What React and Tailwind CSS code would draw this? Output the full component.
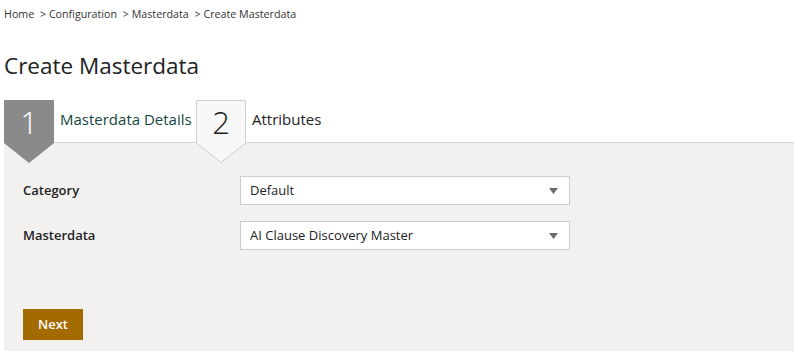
import React from 'react';

const font = { fontFamily: '"Open Sans", "Noto Sans", sans-serif' };

const StepBadge = ({ num, active }) => (
  <div className="relative z-10 w-[50px] h-[42px] shrink-0">
    <svg className="absolute left-0 top-0 overflow-visible" width="50" height="63" viewBox="0 0 50 63">
      {active ? (
        <polygon points="0,0 50,0 50,43 25,63 0,43" fill="#8a8a8a" />
      ) : (
        <polygon points="0.5,0.5 49.5,0.5 49.5,43 25,62.5 0.5,43" fill="#f8f8f8" stroke="#cfcfcf" />
      )}
    </svg>
    <div
      className={`relative flex h-[45px] items-center justify-center text-[31px] font-light leading-none ${
        active ? 'text-white' : 'text-[#222]'
      }`}
    >
      {num}
    </div>
  </div>
);

const SelectBox = ({ value }) => (
  <div className="flex h-[29px] w-[330px] items-center justify-between border border-[#cccccc] bg-white pl-[9px] pr-[11px]">
    <span className="text-[13px] text-[#222]">{value}</span>
    <svg width="9" height="6" viewBox="0 0 9 6">
      <polygon points="0,0 9,0 4.5,6" fill="#6b6b6b" />
    </svg>
  </div>
);

export default function App() {
  return (
    <div className="min-h-[351px] bg-white pl-[4px]" style={font}>
      <div className="pt-[7px] text-[10.7px] text-[#333] leading-[14px]">
        Home <span className="ml-[3px]">&gt;</span> Configuration <span className="ml-[3px]">&gt;</span> Masterdata{' '}
        <span className="ml-[3px]">&gt;</span> Create Masterdata
      </div>

      <h1 className="mt-[30px] text-[22.5px] font-normal leading-[30px] text-[#222]">Create Masterdata</h1>

      <div className="mt-[19px] flex h-[42px] items-start">
        <StepBadge num="1" active />
        <div className="ml-[6px] mt-[8px] w-[136px] text-[15px] text-[#14463f]">Masterdata Details</div>
        <StepBadge num="2" />
        <div className="ml-[6px] mt-[8px] text-[15px] text-[#222]">Attributes</div>
      </div>

      <div className="h-[210px] border-t border-[#d6d6d6] bg-[#f2f1f0] pl-[19px] pt-[33px]">
        <div className="grid grid-cols-[217px_330px] gap-y-[16px]">
          <div className="flex items-center text-[13px] font-semibold text-[#222]">Category</div>
          <SelectBox value="Default" />
          <div className="flex items-center text-[13px] font-semibold text-[#222]">Masterdata</div>
          <SelectBox value="AI Clause Discovery Master" />
        </div>
        <button className="mt-[59px] h-[31px] w-[60px] bg-[#a36a00] text-[13px] font-semibold text-white">
          Next
        </button>
      </div>
    </div>
  );
}
